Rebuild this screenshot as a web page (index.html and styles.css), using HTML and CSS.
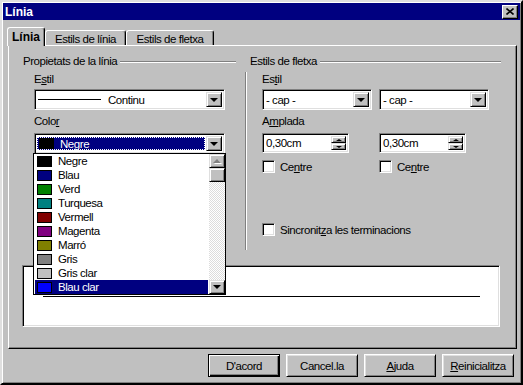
FILE: index.html
```html
<!DOCTYPE html>
<html lang="ca">

<head>
    <meta charset="UTF-8">
    <title>Línia</title>
    <link rel="stylesheet" href="styles.css">
</head>

<body>
    <!-- line properties dialog -->
    <div class="window">
        <div class="titlebar">
            <span class="title">Línia</span>
            <div class="close">
                <svg width="8" height="7" viewBox="0 0 8 7">
                    <path d="M0.5 0.5 L7.5 6.5 M7.5 0.5 L0.5 6.5" stroke="#000" stroke-width="1.6" fill="none"/>
                </svg>
            </div>
        </div>

        <div class="tabs">
            <div class="tab active">Línia</div>
            <div class="tab tab-styles">Estils de línia</div>
            <div class="tab tab-arrows">Estils de fletxa</div>
        </div>

        <div class="panel">
            <div class="groups">
                <!-- left: line properties -->
                <div class="group group-line">
                    <div class="group-title"><span>Propietats de la línia</span><span class="rule"></span></div>
                    <div class="group-body">
                        <div class="label">E<u>s</u>til</div>
                        <div class="combo combo-wide">
                            <div class="combo-value">
                                <span class="line-sample"></span>
                                <span>Continu</span>
                            </div>
                            <div class="combo-btn"><span class="arrow-down"></span></div>
                        </div>

                        <div class="label label-gap">Colo<u>r</u></div>
                        <div class="color-wrap">
                            <div class="combo combo-wide">
                                <div class="combo-value focused">
                                    <span class="swatch" style="background:#000000"></span>
                                    <span>Negre</span>
                                </div>
                                <div class="combo-btn"><span class="arrow-down"></span></div>
                            </div>

                            <!-- the open list sits over the preview -->
                            <div class="dropdown">
                                <ul class="color-list">
                                    <li><span class="swatch" style="background:#000000"></span>Negre</li>
                                    <li><span class="swatch" style="background:#000080"></span>Blau</li>
                                    <li><span class="swatch" style="background:#008000"></span>Verd</li>
                                    <li><span class="swatch" style="background:#008080"></span>Turquesa</li>
                                    <li><span class="swatch" style="background:#800000"></span>Vermell</li>
                                    <li><span class="swatch" style="background:#800080"></span>Magenta</li>
                                    <li><span class="swatch" style="background:#808000"></span>Marró</li>
                                    <li><span class="swatch" style="background:#808080"></span>Gris</li>
                                    <li><span class="swatch" style="background:#c0c0c0"></span>Gris clar</li>
                                    <li class="selected"><span class="swatch" style="background:#0000ff"></span>Blau clar</li>
                                </ul>
                                <div class="scrollbar">
                                    <div class="sb-btn"><span class="arrow-up disabled"></span></div>
                                    <div class="sb-thumb"></div>
                                    <div class="sb-track"></div>
                                    <div class="sb-btn"><span class="arrow-down"></span></div>
                                </div>
                            </div>
                        </div>
                    </div>
                </div>

                <div class="vsep"></div>

                <!-- right: arrow styles -->
                <div class="group group-arrow">
                    <div class="group-title"><span>Estils de fletxa</span><span class="rule"></span></div>
                    <div class="group-body">
                        <div class="label">Es<u>t</u>il</div>
                        <div class="pair">
                            <div class="combo">
                                <div class="combo-value">- cap -</div>
                                <div class="combo-btn"><span class="arrow-down"></span></div>
                            </div>
                            <div class="combo">
                                <div class="combo-value">- cap -</div>
                                <div class="combo-btn"><span class="arrow-down"></span></div>
                            </div>
                        </div>

                        <div class="label label-gap">A<u>m</u>plada</div>
                        <div class="pair">
                            <div class="spin">
                                <div class="spin-value">0,30cm</div>
                                <div class="spin-btns">
                                    <div class="spin-btn"><span class="arrow-up small"></span></div>
                                    <div class="spin-btn"><span class="arrow-down small"></span></div>
                                </div>
                            </div>
                            <div class="spin">
                                <div class="spin-value">0,30cm</div>
                                <div class="spin-btns">
                                    <div class="spin-btn"><span class="arrow-up small"></span></div>
                                    <div class="spin-btn"><span class="arrow-down small"></span></div>
                                </div>
                            </div>
                        </div>

                        <div class="pair checks">
                            <label class="check"><span class="box"></span>Ce<u>n</u>tre</label>
                            <label class="check"><span class="box"></span>Ce<u>n</u>tre</label>
                        </div>

                        <label class="check sync"><span class="box"></span>Sincronit<u>z</u>a les terminacions</label>
                    </div>
                </div>
            </div>

            <div class="preview">
                <div class="preview-line"></div>
            </div>
        </div>

        <div class="actions">
            <div class="button default">D'acord</div>
            <div class="button">Cancel.la</div>
            <div class="button"><u>A</u>juda</div>
            <div class="button"><u>R</u>einicialitza</div>
        </div>
    </div>
</body>

</html>
```

FILE: styles.css
```css
* {
    box-sizing: border-box;
}

body {
    margin: 0;
    background: #c0c0c0;
    font-family: "Liberation Sans", Arial, sans-serif;
    font-size: 11.5px;
    letter-spacing: -0.45px;
    color: #000;
}

u {
    text-decoration: underline;
    text-underline-offset: 1px;
}

ul {
    list-style-type: none;
    margin: 0;
    padding: 0;
}

/* window frame */
.window {
    width: 523px;
    height: 385px;
    padding: 1px;
    background: #c0c0c0;
    border: 2px solid;
    border-color: #dfdfdf #000 #000 #dfdfdf;
    box-shadow: inset 1px 1px #fff, inset -1px -1px #808080;
}

.titlebar {
    display: flex;
    align-items: center;
    height: 17px;
    padding: 0 2px 0 2px;
    background: #000080;
    color: #fff;
}

.title {
    flex: 1;
    font-weight: bold;
    font-size: 12px;
    letter-spacing: 0;
}

.close {
    display: flex;
    align-items: center;
    justify-content: center;
    width: 16px;
    height: 14px;
    background: #c0c0c0;
    border: 1px solid;
    border-color: #fff #000 #000 #fff;
    box-shadow: inset -1px -1px #808080;
}

/* tabs */
.tabs {
    display: flex;
    align-items: flex-end;
    height: 25px;
    padding-left: 4px;
}

.tab {
    display: flex;
    align-items: center;
    justify-content: center;
    height: 15px;
    padding-top: 2px;
    background: #c0c0c0;
    border: 1px solid;
    border-bottom: none;
    border-color: #fff #000 #000 #fff;
    border-radius: 3px 3px 0 0;
    box-shadow: inset -1px 0 #808080;
}

.tab.active {
    position: relative;
    z-index: 1;
    width: 38px;
    height: 19px;
    margin-bottom: -1px;
    padding-top: 0;
    font-weight: bold;
    font-size: 12px;
    letter-spacing: 0;
}

.tab-styles {
    width: 81px;
}

.tab-arrows {
    width: 88px;
}

/* tab page */
.panel {
    height: 304px;
    margin: 0 3px 0 5px;
    padding: 9px 0 0 14px;
    border: 1px solid;
    border-color: #fff #000 #000 #fff;
    box-shadow: inset -1px -1px #808080;
}

.groups {
    display: flex;
    height: 195px;
}

.group-line {
    width: 215px;
}

.group-arrow {
    width: 253px;
    margin-left: 3px;
}

.group-title {
    display: flex;
    align-items: center;
    gap: 3px;
    height: 13px;
    line-height: 13px;
    white-space: nowrap;
}

.group-title .rule {
    flex: 1;
    height: 2px;
    margin-right: 2px;
    border-top: 1px solid #808080;
    border-bottom: 1px solid #fff;
}

.vsep {
    width: 2px;
    height: 178px;
    margin: 17px 0 0 7px;
    border-left: 1px solid #808080;
    border-right: 1px solid #fff;
}

.group-line .group-body {
    padding-left: 11px;
}

.group-arrow .group-body {
    padding-left: 12px;
}

.label {
    height: 13px;
    line-height: 13px;
    margin: 5px 0 3px 0;
}

.label-gap {
    margin-bottom: 5px;
}

/* sunken fields */
.combo,
.spin,
.box,
.preview {
    background: #fff;
    border: 1px solid;
    border-color: #808080 #fff #fff #808080;
    box-shadow: inset 1px 1px #000, inset -1px -1px #dfdfdf;
}

.combo {
    display: flex;
    width: 110px;
    height: 21px;
    padding: 2px;
}

.combo-wide {
    width: 191px;
}

.combo-value {
    flex: 1;
    display: flex;
    align-items: center;
    padding-left: 1px;
    white-space: nowrap;
}

.combo-value.focused {
    margin: 1px 1px 1px 0;
    background: #000080;
    color: #fff;
    outline: 1px dotted #fff;
    outline-offset: -1px;
}

.line-sample {
    width: 63px;
    height: 1px;
    margin-right: 7px;
    background: #000;
}

.combo-btn,
.sb-btn,
.spin-btn {
    display: flex;
    align-items: center;
    justify-content: center;
    background: #c0c0c0;
    border: 1px solid;
    border-color: #dfdfdf #000 #000 #dfdfdf;
    box-shadow: inset 1px 1px #fff, inset -1px -1px #808080;
}

.combo-btn {
    width: 16px;
}

.arrow-down,
.arrow-up {
    width: 0;
    height: 0;
    border-left: 4px solid transparent;
    border-right: 4px solid transparent;
}

.arrow-down {
    border-top: 4px solid #000;
}

.arrow-up {
    border-bottom: 4px solid #000;
}

.arrow-up.disabled {
    border-bottom-color: #808080;
    filter: drop-shadow(1px 1px 0 #fff);
}

.arrow-down.small,
.arrow-up.small {
    border-left-width: 3px;
    border-right-width: 3px;
}

.arrow-down.small {
    border-top-width: 2px;
}

.arrow-up.small {
    border-bottom-width: 2px;
}

.swatch {
    display: inline-block;
    flex: none;
    width: 15px;
    height: 11px;
    margin-right: 6px;
    border: 1px solid #000;
}

.focused .swatch {
    margin-left: 1px;
}

/* open colour list */
.color-wrap {
    position: relative;
    width: 191px;
}

.dropdown {
    position: absolute;
    z-index: 2;
    top: 20px;
    left: -1px;
    display: flex;
    width: 193px;
    height: 142px;
    background: #fff;
    border: 1px solid #000;
}

.color-list {
    flex: 1;
    padding: 0 1px;
}

.color-list li {
    display: flex;
    align-items: center;
    height: 14px;
    padding-left: 2px;
    white-space: nowrap;
}

.color-list li.selected {
    background: #000080;
    color: #fff;
}

.scrollbar {
    display: flex;
    flex-direction: column;
    width: 16px;
}

.sb-btn,
.sb-thumb {
    height: 14px;
}

.sb-thumb {
    background: #c0c0c0;
    border: 1px solid;
    border-color: #dfdfdf #000 #000 #dfdfdf;
    box-shadow: inset 1px 1px #fff, inset -1px -1px #808080;
}

.sb-track {
    flex: 1;
    background: repeating-conic-gradient(#dcdcdc 0 25%, #fff 0 50%) 0 0 / 2px 2px;
}

/* right column */
.pair {
    display: grid;
    grid-template-columns: 110px 110px;
    column-gap: 7px;
}

.spin {
    display: flex;
    width: 87px;
    height: 20px;
    padding: 2px;
}

.spin-value {
    flex: 1;
    display: flex;
    align-items: center;
    padding-left: 1px;
}

.spin-btns {
    display: flex;
    flex-direction: column;
    width: 15px;
}

.spin-btn {
    flex: 1;
}

.checks {
    margin-top: 7px;
}

.check {
    display: flex;
    align-items: center;
    height: 13px;
    white-space: nowrap;
}

.box {
    width: 13px;
    height: 13px;
    margin-right: 5px;
}

.sync {
    margin-top: 50px;
}

/* preview area */
.preview {
    display: flex;
    align-items: center;
    width: 478px;
    height: 62px;
    margin: 15px 0 0 -1px;
    padding: 0 19px 0 20px;
}

.preview-line {
    flex: 1;
    height: 1px;
    background: #000;
}

/* bottom buttons */
.actions {
    display: flex;
    justify-content: flex-end;
    gap: 6px;
    padding: 5px 6px 0 0;
}

.button {
    display: flex;
    align-items: center;
    justify-content: center;
    width: 72px;
    height: 23px;
    border: 1px solid;
    border-color: #fff #000 #000 #fff;
    box-shadow: inset 1px 1px #dfdfdf, inset -1px -1px #808080;
}

.button.default {
    border-color: #000;
    box-shadow: inset 1px 1px #fff, inset -1px -1px #000, inset -2px -2px #808080;
}
```
